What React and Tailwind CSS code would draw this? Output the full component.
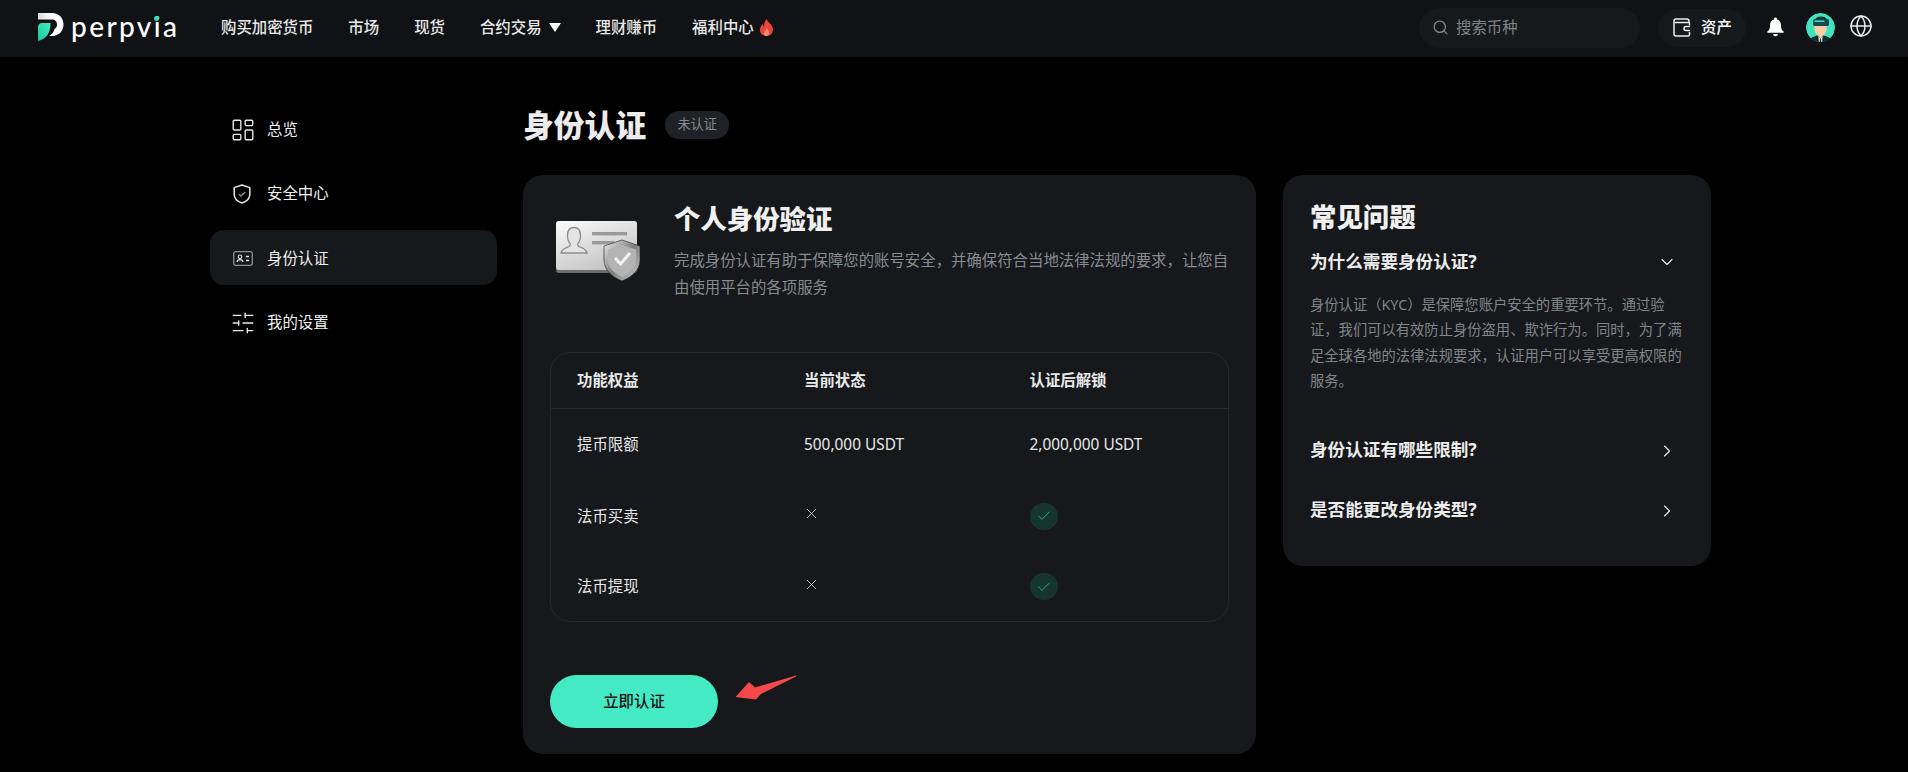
import React from "react";
import { ChevronDown, ChevronRight, Check, X, Search, Globe, LayoutDashboard, SlidersHorizontal } from "lucide-react";

const navItems = ["市场", "现货"];

const rows = [
  { name: "提币限额", now: "500,000 USDT", after: "2,000,000 USDT" },
  { name: "法币买卖" },
  { name: "法币提现" },
];

const Logo = () => (
  <div className="flex items-start">
    <svg width="26" height="28" viewBox="0 0 26 28" className="mt-[13px]">
      <defs>
        <linearGradient id="lg1" x1="0" y1="1" x2="1" y2="0">
          <stop offset="0" stopColor="#17c998" />
          <stop offset="1" stopColor="#46ecc4" />
        </linearGradient>
        <linearGradient id="lg2" x1="0" y1="0" x2="1" y2="0">
          <stop offset="0" stopColor="#d9d9d9" />
          <stop offset="0.5" stopColor="#ffffff" />
        </linearGradient>
      </defs>
      <path
        d="M0 0H14C21 0 25.5 5 25.5 11.5C25.5 18 21 23 14 23H11C14 21 16 19 16.5 16C18.5 15 19 13 19 11.5C19 8.5 17 6.5 14 6.5H0Z"
        fill="url(#lg2)"
      />
      <path d="M0 14C0 11.5 2 10 4 10H12.5C12.5 19 9 26 0 28Z" fill="url(#lg1)" />
    </svg>
    <span className="relative ml-[7px] mt-[10px] text-[28px] leading-[32px] font-medium tracking-[2.4px] text-white font-['Lato','Noto_Sans',sans-serif]">
      perpvia
      <span className="absolute right-[20px] top-[6px] h-[5px] w-[5px] rounded-full bg-[#2fe0b4]" />
    </span>
  </div>
);

const Flame = () => (
  <svg width="15" height="17" viewBox="0 0 15 17">
    <path
      d="M7.5 0C8.5 3 12 4.5 13.5 8C15 12 12.5 17 7.5 17C2.5 17 0 13 1.2 9C1.8 7.2 2.8 6.2 3.6 5.2C4 6.5 4.4 7 5 7.4C5 4.5 5.8 2 7.5 0Z"
      fill="#e8453c"
    />
    <path d="M7.5 9C8.5 11 10.5 12 10 14.2C9.6 16 8.5 17 7.3 17C5.8 17 4.6 15.6 5 14C5.4 12.2 7 11.2 7.5 9Z" fill="#f98a6b" />
  </svg>
);

const Wallet = () => (
  <svg width="18" height="19" viewBox="0 0 18 19" fill="none" stroke="#ececec" strokeWidth="1.5">
    <path d="M16 5V3.2C16 2 15.2 1 14 1H3C1.9 1 1 1.9 1 3V16C1 17.1 1.9 18 3 18H15C16.1 18 16.5 17.2 16.5 16.4V14" />
    <path d="M1.5 4.5H15.5C16.2 4.5 16.5 5 16.5 5.6V7.5" />
    <path d="M17 8.5H13C11.9 8.5 11 9.4 11 10.5C11 11.6 11.9 12.5 13 12.5H17" fill="#16191c" />
  </svg>
);

const Bell = () => (
  <svg width="17" height="20" viewBox="0 0 17 20" fill="#ffffff">
    <path d="M8.5 0.5C9.4 0.5 10 1.1 10 2V2.6C12.7 3.2 14 5.5 14 8.2C14 11.5 14.8 13.2 16.6 14.6C17 15 16.8 15.8 16.2 15.8H0.8C0.2 15.8 0 15 0.4 14.6C2.2 13.2 3 11.5 3 8.2C3 5.5 4.3 3.2 7 2.6V2C7 1.1 7.6 0.5 8.5 0.5Z" />
    <path d="M6 17H11C10.8 18.3 9.8 19.3 8.5 19.3C7.2 19.3 6.2 18.3 6 17Z" />
  </svg>
);

const Avatar = () => (
  <svg width="29" height="29" viewBox="0 0 29 29" className="rounded-full">
    <circle cx="14.5" cy="14.5" r="14.5" fill="#3fe3bd" />
    <path d="M3 29C4 24 9 22.5 14.5 22.5C20 22.5 25 24 26 29Z" fill="#0d2c30" />
    <path d="M12 20H17V23L14.5 25.5L12 23Z" fill="#f7c9a0" />
    <path d="M12.4 23.5L14.5 25.5L16.6 23.5L16 29H13Z" fill="#ffffff" />
    <path d="M14 25.5H15L15.3 29H13.7Z" fill="#0d2c30" />
    <path d="M8.5 12H20.5V16C20.5 20 18 23 14.5 23C11 23 8.5 20 8.5 16Z" fill="#f9cda4" />
    <path d="M9 6.5C10 4.5 12 3.5 15 3.5C18 3.5 20 4.5 21 6.5Z" fill="#12343a" />
    <rect x="7" y="6" width="16" height="7" rx="1.8" fill="#134a50" />
    <rect x="8.5" y="7.6" width="10" height="1.5" rx="0.7" fill="#3fe3bd" />
  </svg>
);

const IdIcon = () => (
  <svg width="20" height="15" viewBox="0 0 20 15" fill="none">
    <rect x="0.7" y="0.7" width="18.6" height="13.6" rx="2" stroke="#8b8f92" strokeWidth="1.3" />
    <circle cx="7" cy="5.8" r="1.8" stroke="#e2e2e2" strokeWidth="1.1" />
    <path d="M4 11C4.3 9.2 5.4 8.6 7 8.6C8.6 8.6 9.7 9.2 10 11" stroke="#e2e2e2" strokeWidth="1.1" />
    <path d="M13 5.5H16M13 9.5H16" stroke="#e2e2e2" strokeWidth="1.4" />
  </svg>
);

const ShieldIcon = () => (
  <svg width="18" height="20" viewBox="0 0 18 20" fill="none">
    <path
      d="M9 1L16.8 3.6V10C16.8 14.6 13.4 17.7 9 19C4.6 17.7 1.2 14.6 1.2 10V3.6Z"
      stroke="#e8e8e8"
      strokeWidth="1.5"
      strokeLinejoin="round"
    />
    <path d="M5.8 10L8 12.1L12.2 8" stroke="#85898c" strokeWidth="1.4" />
  </svg>
);

// grey id card with a shield on its corner
const CardArt = () => (
  <svg width="86" height="62" viewBox="0 0 86 62">
    <defs>
      <linearGradient id="card" x1="0" y1="0" x2="0.6" y2="1">
        <stop offset="0" stopColor="#fbfbfb" />
        <stop offset="1" stopColor="#c4c4c4" />
      </linearGradient>
      <linearGradient id="shield" x1="0" y1="0" x2="1" y2="1">
        <stop offset="0" stopColor="#efefef" />
        <stop offset="0.5" stopColor="#7d7d7d" />
        <stop offset="1" stopColor="#cfcfcf" />
      </linearGradient>
    </defs>
    <rect x="1" y="1" width="81" height="52" rx="3" fill="#6e6e6e" />
    <rect x="1" y="1" width="81" height="49" rx="3" fill="url(#card)" />
    <path
      d="M6 33C7 28.5 11 28 14 26.5C15.5 25.8 15.5 24 14.8 23C13.3 21.5 12.5 19 12.5 15.5C12.5 10.5 15 7.5 19 7.5C23 7.5 25.5 10.5 25.5 15.5C25.5 19 24.7 21.5 23.2 23C22.5 24 22.5 25.8 24 26.5C27 28 31 28.5 32 33Z"
      fill="#e4e4e4"
      stroke="#8e8e8e"
      strokeWidth="1.3"
    />
    <rect x="37" y="12" width="35" height="3.4" fill="#9a9a9a" />
    <rect x="37" y="21" width="22" height="3.4" fill="#9a9a9a" />
    <path d="M67 20L85 26V40C85 50 77 57 67 61C57 57 49 50 49 40V26Z" fill="url(#shield)" stroke="#1c1c1c" strokeWidth="0.6" />
    <path d="M67 25L81 29.5V40C81 48 74.5 53.5 67 57C59.5 53.5 53 48 53 40V29.5Z" fill="#b4b4b4" />
    <path d="M60 38L65.5 44L75 33" fill="none" stroke="#f2f2f2" strokeWidth="3" />
  </svg>
);

const Header = () => (
  <header className="flex h-[57px] shrink-0 items-center bg-[#101215] pb-[2px] pl-[38px] pr-[35px]">
    <div className="h-full w-[183px] shrink-0">
      <Logo />
    </div>
    <nav className="flex items-center gap-[35px] text-[15.4px] font-medium text-[#e8e8e8]">
      <span>购买加密货币</span>
      {navItems.map((item) => (
        <span key={item}>{item}</span>
      ))}
      <span className="flex items-center gap-[7px]">
        合约交易
        <svg width="12" height="9" viewBox="0 0 12 9" fill="#ffffff">
          <path d="M0 0H12L6 9Z" />
        </svg>
      </span>
      <span>理财赚币</span>
      <span className="flex items-center gap-[5px]">
        福利中心
        <Flame />
      </span>
    </nav>
    <div className="ml-auto flex items-center">
      <div className="flex h-[40px] w-[221px] items-center rounded-full bg-[#16191c] pl-[13px] text-[15.4px] text-[#7f8488]">
        <Search size={17} strokeWidth={1.8} className="text-[#85898c]" />
        <span className="ml-[7px]">搜索币种</span>
      </div>
      <div className="ml-[18px] flex h-[38px] w-[88px] items-center rounded-full bg-[#16191c] pl-[15px] text-[15.4px] font-medium text-white">
        <Wallet />
        <span className="ml-[10px]">资产</span>
      </div>
      <div className="-mt-[1px] ml-[21px]">
        <Bell />
      </div>
      <div className="ml-[22px] flex">
        <Avatar />
      </div>
      <Globe size={24} strokeWidth={1.5} className="-mt-[4px] ml-[14px] text-[#ececec]" />
    </div>
  </header>
);

const Sidebar = () => (
  <aside className="flex w-[287px] shrink-0 flex-col gap-[9.5px] pt-[44px] text-[15.4px] text-[#f0f0f0]">
    <div className="flex h-[55px] items-center rounded-[14px] pl-[23px] pt-[2px]">
      <span className="flex w-[34px] justify-start">
        <LayoutDashboard size={26} strokeWidth={1.25} className="-ml-[3px] text-[#ececec]" />
      </span>
      总览
    </div>
    <div className="flex h-[55px] items-center rounded-[14px] pl-[23px] pt-[1px]">
      <span className="flex w-[34px] justify-start">
        <ShieldIcon />
      </span>
      安全中心
    </div>
    <div className="flex h-[55px] items-center rounded-[14px] bg-[#16191c] pl-[23px] pt-[2px]">
      <span className="flex w-[34px] justify-start">
        <IdIcon />
      </span>
      身份认证
    </div>
    <div className="flex h-[55px] items-center rounded-[14px] pl-[23px] pt-[1px]">
      <span className="flex w-[34px] justify-start">
        <SlidersHorizontal size={26} strokeWidth={1.25} className="-ml-[3px] text-[#ececec]" />
      </span>
      我的设置
    </div>
  </aside>
);

const StatusCell = ({ text, ok }) => {
  if (text) return <span>{text}</span>;
  if (ok)
    return (
      <span className="flex h-[27px] w-[28px] items-center justify-center rounded-full bg-[#16352d]">
        <Check size={16} strokeWidth={1.3} className="text-[#35c193]" />
      </span>
    );
  return <X size={17} strokeWidth={1.2} className="-mt-[5px] -ml-[1px] text-[#d4d4d4]" />;
};

const Table = () => (
  <div className="mt-[51px] h-[270px] rounded-[20px] border border-[#26282c] text-[15.4px] text-[#e8e8e8]">
    <div className="grid h-[56px] grid-cols-[227px_225.5px_1fr] items-center border-b border-[#26282c] pl-[26px] pt-[1px] font-semibold">
      <span>功能权益</span>
      <span>当前状态</span>
      <span>认证后解锁</span>
    </div>
    <div className="pt-[1.5px]">
      {rows.map((row, i) => (
        <div
          key={row.name}
          className={`grid h-[70.5px] grid-cols-[227px_225.5px_1fr] items-center pl-[26px] ${i === 0 ? "pb-[3px]" : ""}`}
        >
          <span>{row.name}</span>
          <StatusCell text={row.now} />
          <StatusCell text={row.after} ok />
        </div>
      ))}
    </div>
  </div>
);

const MainCard = () => (
  <div className="relative h-[579px] w-[733px] rounded-[20px] bg-[#16181b] px-[27px] pt-[26px]">
    <div className="flex">
      <div className="w-[124px] shrink-0 pl-[5px] pt-[19px]">
        <CardArt />
      </div>
      <div>
        <h2 className="text-[26.4px] font-black leading-[36px] text-[#f0f0f0]">个人身份验证</h2>
        <p className="mt-[10px] w-[560px] text-[15.4px] leading-[27px] text-[#868c90]">
          完成身份认证有助于保障您的账号安全，并确保符合当地法律法规的要求，让您自由使用平台的各项服务
        </p>
      </div>
    </div>
    <Table />
    <div className="mt-[53px] flex items-start">
      <button className="flex h-[53px] w-[168px] items-center justify-center rounded-full bg-[#43eac3] text-[15.4px] font-medium text-[#101215]">
        立即认证
      </button>
    </div>
    {/* red arrow drawn on top of the screenshot */}
    <svg width="64" height="26" viewBox="0 0 64 26" className="absolute left-[212px] top-[500px]">
      <path d="M0.5 22L14 7L20 12.5L61 0.5L61 1.5L26 19L21 24.5Z" fill="#f5484a" />
    </svg>
  </div>
);

const FaqItem = ({ title, open }) => (
  <div className="flex h-[30px] items-center justify-between pr-[7px] text-[17.6px] font-bold text-[#ececec]">
    <span>{title}</span>
    {open ? (
      <ChevronDown size={20} strokeWidth={1.3} className="mt-[2px] text-[#ececec]" />
    ) : (
      <ChevronRight size={20} strokeWidth={1.3} className="mt-[2px] text-[#ececec]" />
    )}
  </div>
);

const FaqCard = () => (
  <div className="h-[391px] w-[428px] rounded-[20px] bg-[#16181b] px-[27px] pt-[24px]">
    <h2 className="text-[26.4px] font-black leading-[36px] text-[#f0f0f0]">常见问题</h2>
    <div className="mt-[11px]">
      <FaqItem title="为什么需要身份认证?" open />
    </div>
    <p className="mt-[16px] w-[374px] text-[14.3px] leading-[25.4px] text-[#80868a]">
      身份认证（KYC）是保障您账户安全的重要环节。通过验证，我们可以有效防止身份盗用、欺诈行为。同时，为了满足全球各地的法律法规要求，认证用户可以享受更高权限的服务。
    </p>
    <div className="mt-[41px] flex flex-col gap-[30px]">
      <FaqItem title="身份认证有哪些限制?" />
      <FaqItem title="是否能更改身份类型?" />
    </div>
  </div>
);

export default function App() {
  return (
    <div className="flex min-h-screen flex-col bg-black font-['Noto_Sans','Noto_Sans_CJK_SC',sans-serif]">
      <Header />
      <main className="flex pl-[210px]">
        <Sidebar />
        <div className="ml-[26px] flex-1">
          <div className="flex h-[118px] items-start pt-[47px]">
            <h1 className="text-[30.8px] font-black leading-[42px] text-[#ececec]">身份认证</h1>
            <span className="ml-[19px] mt-[7px] flex h-[28px] w-[64px] items-center justify-center rounded-full bg-[#1e2125] text-[13.2px] text-[#858a8e]">
              未认证
            </span>
          </div>
          <div className="flex items-start gap-[27px]">
            <MainCard />
            <FaqCard />
          </div>
        </div>
      </main>
    </div>
  );
}
